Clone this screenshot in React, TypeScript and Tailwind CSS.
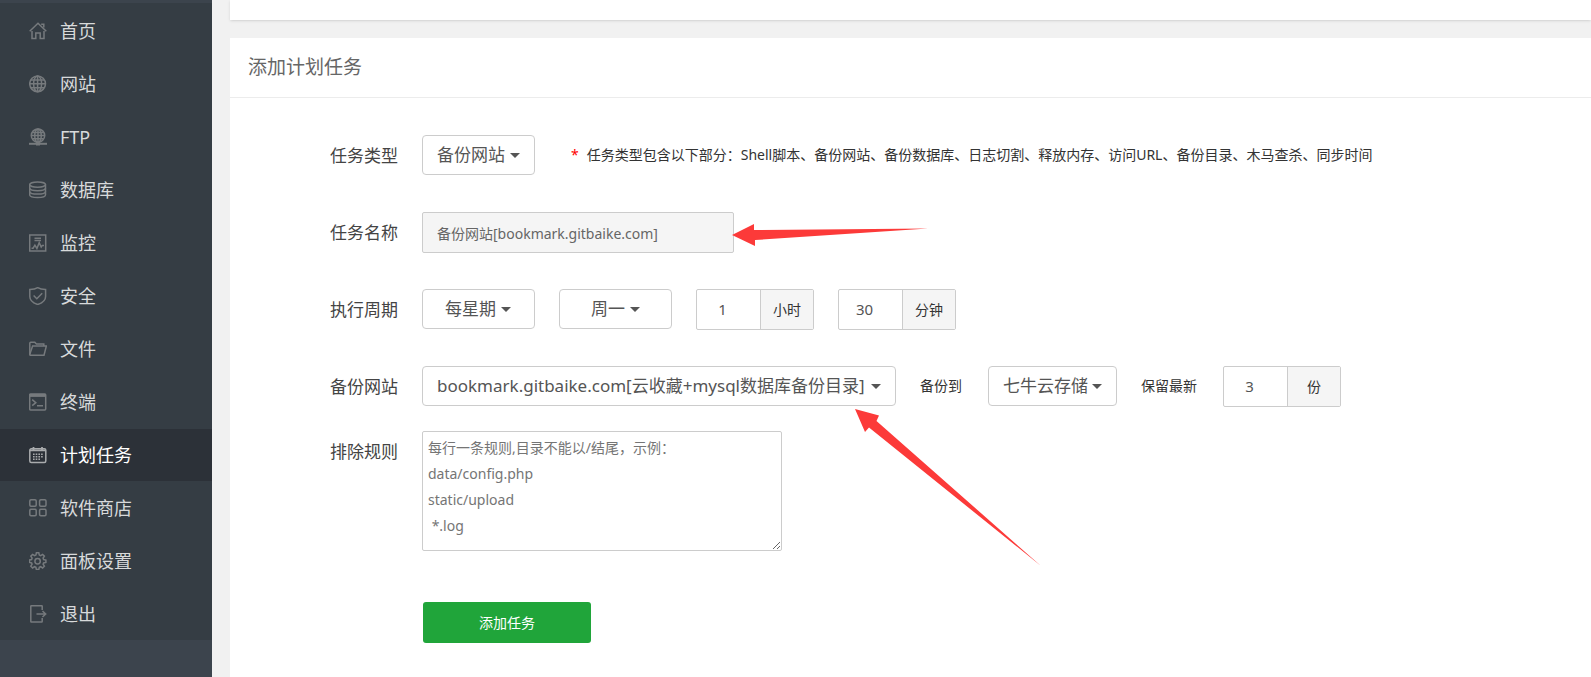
import type { ReactNode } from "react";
import clsx from "clsx";

const icons: Record<string, ReactNode> = {
  home: (
    <>
      <path d="M.7 9.3 9 1.3l8.3 8" />
      <path d="M12.2 2.2h2.6v3.2" />
      <path d="M3 9v7.4h3.8V11h4.4v5.4H15V9" />
    </>
  ),
  site: (
    <>
      <circle cx="8.6" cy="8.8" r="7.9" />
      <ellipse cx="8.6" cy="8.8" rx="4" ry="7.9" />
      <path d="M8.6 1v15.6M.8 8.8h15.6M2 4.9h13.2M2 12.7h13.2" />
    </>
  ),
  ftp: (
    <>
      <circle cx="9" cy="7.6" r="6.7" />
      <ellipse cx="9" cy="7.6" rx="3.3" ry="6.7" />
      <path d="M9 1v13M2.4 7.6h13.2M3.4 4.4h11.2M3.4 10.8h11.2" />
      <path d="M0 15.8h18" strokeWidth="2" />
      <path d="M7 15.8h4" strokeWidth="3.4" />
    </>
  ),
  database: (
    <>
      <ellipse cx="8.6" cy="3.6" rx="7.9" ry="2.7" />
      <path d="M.7 3.6v10.2c0 1.6 3.5 2.8 7.9 2.8s7.9-1.2 7.9-2.8V3.6" />
      <path d="M.7 7c0 1.6 3.5 2.7 7.9 2.7s7.9-1.1 7.9-2.7M.7 10.4c0 1.6 3.5 2.7 7.9 2.7s7.9-1.1 7.9-2.7" />
    </>
  ),
  monitor: (
    <>
      <path d="M.7.9h16v16H.7z" />
      <path d="M5.5 4.2h6.5M5.5 6.4h6.5" />
      <path d="M2.5 14.2h1.6l1.8-3 2 3.3 2.3-5.8 2 4.3 1.2-1.6h1.6" />
    </>
  ),
  safe: (
    <>
      <path d="M8.7.7C6.6 2 3.8 2.5.8 2.6v6.8c0 4 3.6 6.6 7.9 8.1 4.3-1.5 7.9-4.1 7.9-8.1V2.6c-3-.1-5.8-.6-7.9-1.9z" />
      <path d="m4.6 8.5 3.2 3.2 5.4-5.5" />
    </>
  ),
  files: (
    <>
      <path d="M.8 14.5V3.2c0-.6.4-1 1-1h4l1.6 1.7h7.4v2.2" />
      <path d="M3.6 6.1h13.7l-2.3 9.2H1.6c-.6 0-.9-.4-.8-1z" />
    </>
  ),
  terminal: (
    <>
      <rect x=".7" y=".9" width="16" height="16" rx="1" />
      <path d="M.7 2.4h16" strokeWidth="3" />
      <path d="m3.2 6.7 3.6 3-3.6 3M8 12.8h6" />
    </>
  ),
  cron: (
    <>
      <rect x=".8" y="2.8" width="16" height="13.7" rx="1.5" />
      <path d="M1 4.3h15.6M4.5.9v3M13 .9v3" strokeWidth="1.8" />
      <path d="M4 8.3h9.8M4 10.8h9.8M4 13.3h7.3" strokeDasharray="1.6 1.1" />
    </>
  ),
  store: (
    <>
      <rect x=".8" y=".8" width="6.4" height="6.4" rx="1.2" />
      <rect x="10.6" y=".8" width="6.4" height="6.4" rx="1.2" />
      <rect x=".8" y="10.3" width="6.4" height="6.4" rx="1.2" />
      <rect x="10.6" y="10.3" width="6.4" height="6.4" rx="1.2" />
    </>
  ),
  config: (
    <>
      <path d="m6.9 3.1.5-2.3h2.4l.5 2.3 1.3.6 2-1.3 1.8 1.8-1.3 2 .5 1.300 2.300.5v2.400l-2.300.5-.5 1.300 1.300 2-1.800 1.800-2-1.300-1.300.6-.5 2.300H7.400l-.5-2.300-1.300-.6-2 1.300-1.800-1.800 1.300-2-.5-1.300L.500 10.400V8l2.100-.5.5-1.300-1.300-2 1.800-1.800 2 1.300z" />
      <circle cx="8.600" cy="9.200" r="2.700" />
    </>
  ),
  exit: (
    <>
      <path d="M13.200 5V1.300c0-.3-.2-.5-.5-.5H2.300c-.3 0-.5.2-.5.500v15.200c0 .3.2.5.5.5h10.400c.3 0 .5-.2.5-.5V13" />
      <path d="M7.500 9h9M13.500 6l3.200 3-3.200 3" />
    </>
  ),
};

const menus = [
  { key: "home", title: "首页" },
  { key: "site", title: "网站" },
  { key: "ftp", title: "FTP" },
  { key: "database", title: "数据库" },
  { key: "monitor", title: "监控" },
  { key: "safe", title: "安全" },
  { key: "files", title: "文件" },
  { key: "terminal", title: "终端" },
  { key: "cron", title: "计划任务" },
  { key: "store", title: "软件商店" },
  { key: "config", title: "面板设置" },
  { key: "exit", title: "退出" },
];

function Sidebar() {
  return (
    <aside className="w-[212px] shrink-0 bg-[#3c444d] pt-[3px]">
      <nav className="flex flex-col gap-px bg-[#353d44] pt-0.5">
        {menus.map((item) => {
          const active = item.key === "cron";
          return (
            <a
              key={item.key}
              href={`#${item.key}`}
              className={clsx(
                "flex h-[52px] items-center gap-[13px] pl-[29px] text-lg",
                active ? "bg-[#2c3138] text-white" : "text-[#d8dadb]"
              )}
            >
              <svg
                viewBox="0 0 18 18"
                className={clsx("size-[18px]", active ? "text-[#a9abad]" : "text-[#767a7d]")}
                fill="none"
                stroke="currentColor"
                strokeWidth="1.5"
                aria-hidden="true"
              >
                {icons[item.key]}
              </svg>
              {item.title}
            </a>
          );
        })}
      </nav>
    </aside>
  );
}

type DropdownProps = {
  id?: string;
  label?: string;
  value: string;
  className: string;
  caretClass?: string;
  children?: ReactNode;
};

function Dropdown({ id, label, value, className, caretClass = "right-[15px]", children }: DropdownProps) {
  return (
    <div className="relative">
      <select
        id={id}
        aria-label={label}
        defaultValue={value}
        className={clsx(
          "block h-10 appearance-none rounded border border-[#ccc] bg-white text-[17px] text-[#555] outline-none",
          className
        )}
      >
        <option>{value}</option>
      </select>
      <svg
        viewBox="0 0 10 5"
        className={clsx("pointer-events-none absolute top-[18px] h-[5px] w-2.5", caretClass)}
        fill="#555"
        aria-hidden="true"
      >
        <path d="M0 0h10L5 5z" />
      </svg>
      {children}
    </div>
  );
}

function UnitInput({ value, unit }: { value: string; unit: string }) {
  return (
    <label className="flex h-[41px] rounded-xs border border-[#ccc] bg-white text-sm text-[#333]">
      <input
        type="text"
        inputMode="numeric"
        defaultValue={value}
        className="w-[63px] pr-3 text-center text-[15px] text-[#555] outline-none"
      />
      <span className="flex w-[53px] items-center justify-center border-l border-[#ccc] bg-[#f5f5f5]">
        {unit}
      </span>
    </label>
  );
}

function Row({ label, htmlFor, children }: { label: string; htmlFor: string; children: ReactNode }) {
  return (
    <div className="flex min-h-[41px] items-start">
      <label htmlFor={htmlFor} className="w-[168px] shrink-0 text-right text-[17px] leading-[41px] text-[#444]">
        {label}
      </label>
      <div className="flex flex-1 items-start gap-6 pl-6">{children}</div>
    </div>
  );
}

export default function App() {
  return (
    <div className="flex min-h-screen bg-[#f1f1f1] font-['Noto_Sans','Noto_Sans_CJK_SC',sans-serif]">
      <Sidebar />

      <main className="flex min-w-0 flex-1 flex-col gap-[18px] overflow-hidden pl-[18px]">
        <section className="h-5 shrink-0 bg-white shadow-sm" />

        <section className="flex-1 bg-white pb-6">
          <h1 className="border-b border-[#ececec] pl-[18px] text-[19px] leading-[59px] text-[#666]">
            添加计划任务
          </h1>

          <form className="pt-[37px]" onSubmit={(e) => e.preventDefault()}>
            <div className="flex flex-col gap-9">
              <Row label="任务类型" htmlFor="task-type">
                <Dropdown id="task-type" value="备份网站" className="w-[113px] pl-3.5" />
                <p className="ml-3 flex gap-2 text-sm leading-[39px] text-[#333]">
                  <span className="text-[#f00]">*</span>
                  任务类型包含以下部分：Shell脚本、备份网站、备份数据库、日志切割、释放内存、访问URL、备份目录、木马查杀、同步时间
                </p>
              </Row>

              <Row label="任务名称" htmlFor="task-name">
                <div className="relative">
                  <input
                    id="task-name"
                    type="text"
                    readOnly
                    defaultValue="备份网站[bookmark.gitbaike.com]"
                    className="block h-[41px] w-[312px] rounded-xs border border-[#ccc] bg-[#f5f5f5] px-3.5 text-sm text-[#666] outline-none"
                  />
                  <svg
                    viewBox="0 0 196 24"
                    className="pointer-events-none absolute top-3 left-full -ml-0.5 h-6 w-[196px]"
                    fill="#fc3a39"
                    aria-hidden="true"
                  >
                    <path d="M0 11 22 0v6L196 4.500 23 16v6z" />
                  </svg>
                </div>
              </Row>

              <Row label="执行周期" htmlFor="cycle">
                <Dropdown id="cycle" value="每星期" className="w-[113px] pl-[22px]" caretClass="right-6" />
                <Dropdown label="星期" value="周一" className="w-[113px] pl-[31px]" caretClass="right-8" />
                <UnitInput value="1" unit="小时" />
                <UnitInput value="30" unit="分钟" />
              </Row>

              <Row label="备份网站" htmlFor="site">
                <Dropdown
                  id="site"
                  value="bookmark.gitbaike.com[云收藏+mysql数据库备份目录]"
                  className="w-[474px] pl-3.5"
                >
                  <svg
                    viewBox="0 0 186 158"
                    className="pointer-events-none absolute top-[43px] left-[433px] z-10 h-[158px] w-[186px]"
                    fill="#fc3a39"
                    aria-hidden="true"
                  >
                    <path d="M0 0 24 6.500 21.500 12 186 157 14 18.500 10 23z" />
                  </svg>
                </Dropdown>
                <label htmlFor="backup-to" className="w-11 text-sm leading-10 text-[#333]">
                  备份到
                </label>
                <Dropdown id="backup-to" value="七牛云存储" className="w-[129px] pl-3.5" />
                <span className="w-[58px] text-sm leading-10 text-[#333]">保留最新</span>
                <UnitInput value="3" unit="份" />
              </Row>
            </div>

            <div className="pt-6">
              <Row label="排除规则" htmlFor="exclude">
                <textarea
                  id="exclude"
                  placeholder={"每行一条规则,目录不能以/结尾，示例：\ndata/config.php\nstatic/upload\n *.log"}
                  className="block h-[120px] w-[360px] rounded-xs border border-[#ccc] px-[5px] py-[3px] text-sm leading-[26px] outline-none placeholder:text-[#757575]"
                />
              </Row>
            </div>

            <button
              type="submit"
              className="mt-[51px] ml-[193px] block h-[41px] w-[168px] rounded-[3px] bg-[#20a53a] text-sm text-white"
            >
              添加任务
            </button>
          </form>
        </section>
      </main>
    </div>
  );
}
